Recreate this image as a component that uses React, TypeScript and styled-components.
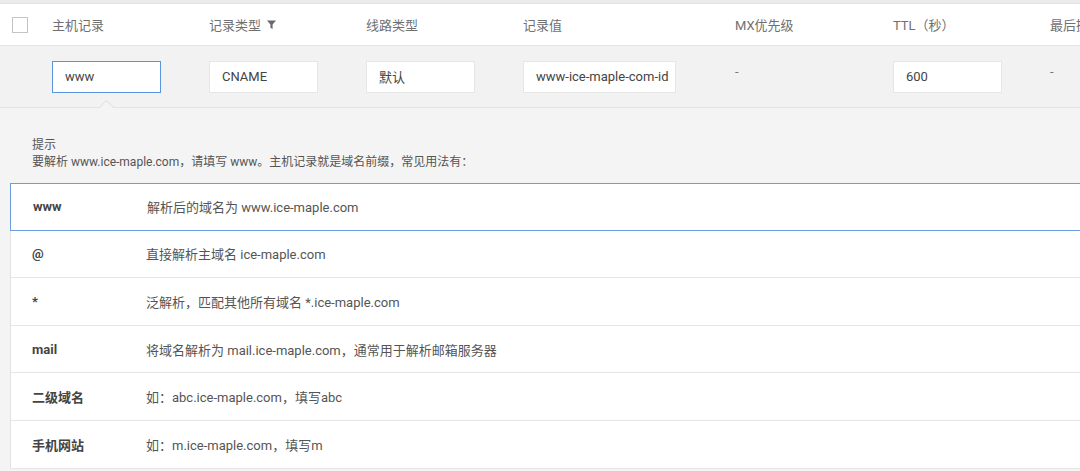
import React from "react";
import styled, { createGlobalStyle } from "styled-components";

const GlobalStyle = createGlobalStyle`
  html, body {
    margin: 0;
    padding: 0;
    overflow: hidden;
    background: #f4f4f4;
  }

  body {
    font-family: Roboto, "Noto Sans CJK SC", "Noto Sans", sans-serif;
    color: #333;
  }

  * {
    box-sizing: border-box;
  }
`;

const columns = [
  { key: "host", title: "主机记录", width: 157 },
  { key: "type", title: "记录类型", width: 157, filter: true },
  { key: "line", title: "线路类型", width: 157 },
  { key: "value", title: "记录值", width: 212 },
  { key: "mx", title: "MX优先级", width: 158 },
  { key: "ttl", title: "TTL（秒）", width: 157 },
  { key: "updated", title: "最后操作时间", width: 200 },
];

const hints = [
  { key: "www", text: "解析后的域名为 www.ice-maple.com", active: true },
  { key: "@", text: "直接解析主域名 ice-maple.com" },
  { key: "*", text: "泛解析，匹配其他所有域名 *.ice-maple.com" },
  { key: "mail", text: "将域名解析为 mail.ice-maple.com，通常用于解析邮箱服务器" },
  { key: "二级域名", text: "如：abc.ice-maple.com，填写abc" },
  { key: "手机网站", text: "如：m.ice-maple.com，填写m" },
];

const FilterIcon = () => (
  <svg width="9" height="9" viewBox="0 0 9 9">
    <path d="M0 0.5h9L5.6 4.6V9L3.4 7.8V4.6z" fill="#6b6b6b" />
  </svg>
);

const App: React.FC = () => {
  return (
    <Page>
      <GlobalStyle />
      <TopStrip />
      <HeaderRow>
        <CheckCell>
          <Checkbox />
        </CheckCell>
        {columns.map((c) => (
          <HeadCell key={c.key} $width={c.width}>
            {c.title}
            {c.filter && (
              <FilterWrap>
                <FilterIcon />
              </FilterWrap>
            )}
          </HeadCell>
        ))}
      </HeaderRow>
      <EditRow>
        <CheckCell />
        <Cell $width={157}>
          <Field $width={109} $focused>
            www
          </Field>
        </Cell>
        <Cell $width={157}>
          <Field $width={109}>CNAME</Field>
        </Cell>
        <Cell $width={157}>
          <Field $width={109}>默认</Field>
        </Cell>
        <Cell $width={212}>
          <Field $width={153}>www-ice-maple-com-id</Field>
        </Cell>
        <Cell $width={158}>
          <Dash>-</Dash>
        </Cell>
        <Cell $width={157}>
          <Field $width={109}>600</Field>
        </Cell>
        <Cell $width={200}>
          <Dash>-</Dash>
        </Cell>
      </EditRow>
      <TipPanel>
        <Caret />
        <TipTitle>提示</TipTitle>
        <TipText>
          要解析 www.ice-maple.com，请填写 www。主机记录就是域名前缀，常见用法有：
        </TipText>
        <HintList>
          {hints.map((h) => (
            <HintRow key={h.key} $active={h.active}>
              <HintKey>{h.key}</HintKey>
              <HintText>{h.text}</HintText>
            </HintRow>
          ))}
        </HintList>
      </TipPanel>
    </Page>
  );
};

export default App;

const Page = styled.div`
  width: 1250px;
  min-height: 471px;
  background: #f4f4f4;
`;

const TopStrip = styled.div`
  height: 4px;
  background: #ebebeb;
  border-bottom: 1px solid #e2e2e2;
`;

const HeaderRow = styled.div`
  display: flex;
  align-items: center;
  height: 42px;
  background: #fff;
  border-bottom: 1px solid #e6e6e6;
`;

const CheckCell = styled.div`
  display: flex;
  align-items: center;
  width: 52px;
  padding-left: 12px;
  flex-shrink: 0;
`;

const Checkbox = styled.span`
  display: block;
  width: 16px;
  height: 16px;
  border: 1px solid #c4c4c4;
  background: #fff;
`;

const HeadCell = styled.div<{ $width: number }>`
  display: flex;
  align-items: center;
  width: ${(p) => p.$width}px;
  flex-shrink: 0;
  font-size: 13px;
  color: #707070;
  white-space: nowrap;
`;

const FilterWrap = styled.span`
  display: inline-flex;
  margin-left: 6px;
  margin-top: -1px;
`;

const EditRow = styled.div`
  display: flex;
  align-items: center;
  height: 62px;
  background: #f2f2f2;
  border-bottom: 1px solid #e4e4e4;
`;

const Cell = styled.div<{ $width: number }>`
  display: flex;
  align-items: center;
  width: ${(p) => p.$width}px;
  flex-shrink: 0;
`;

const Field = styled.div<{ $width: number; $focused?: boolean }>`
  display: flex;
  align-items: center;
  width: ${(p) => p.$width}px;
  height: 32px;
  padding-left: 12px;
  background: #fff;
  border: 1px solid ${(p) => (p.$focused ? "#5a95e0" : "#e6e6e6")};
  font-size: 13px;
  color: #444;
  white-space: nowrap;
  overflow: hidden;
`;

const Dash = styled.span`
  font-size: 13px;
  color: #777;
  margin-top: -11px;
`;

const TipPanel = styled.div`
  position: relative;
  padding: 29px 0 0 10px;
  background: #f4f4f4;
`;

const Caret = styled.span`
  position: absolute;
  top: -6px;
  left: 101px;
  width: 11px;
  height: 11px;
  background: #f4f4f4;
  border-top: 1px solid #e2e2e2;
  border-left: 1px solid #e2e2e2;
  transform: rotate(45deg);
`;

const TipTitle = styled.div`
  padding-left: 22px;
  font-size: 12px;
  line-height: 17px;
  color: #555;
`;

const TipText = styled.div`
  padding-left: 22px;
  font-size: 12px;
  line-height: 17px;
  color: #555;
`;

const HintList = styled.div`
  margin-top: 12px;
  background: #fff;
  border-left: 1px solid #e3e3e3;
`;

const HintRow = styled.div<{ $active?: boolean }>`
  display: flex;
  align-items: center;
  height: 47.6px;
  padding-left: 21px;
  background: #fff;
  border-bottom: 1px solid #e6e6e6;
  ${(p) =>
    p.$active &&
    `
    margin-left: -1px;
    padding-left: 22px;
    border: 1px solid #6a9edf;
  `}
`;

const HintKey = styled.div`
  width: 114px;
  flex-shrink: 0;
  font-size: 13px;
  font-weight: 700;
  color: #444;
`;

const HintText = styled.div`
  font-size: 13px;
  color: #555;
  white-space: nowrap;
`;
